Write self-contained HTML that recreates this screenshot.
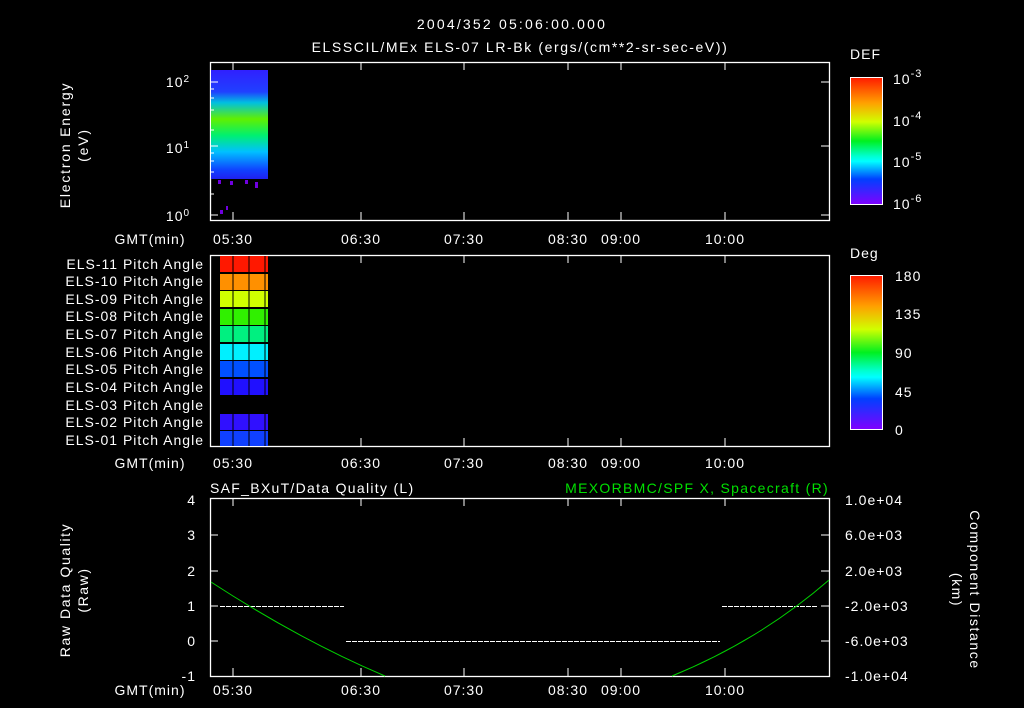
<!DOCTYPE html>
<html><head><style>html,body{margin:0;background:#000;}svg{display:block}text{font-family:"Liberation Sans",sans-serif;fill:#fff;font-size:14px;letter-spacing:1px}</style></head>
<body>
<svg width="1024" height="708" viewBox="0 0 1024 708">
<defs>
<linearGradient id="rb" x1="0" y1="0" x2="0" y2="1">
<stop offset="0" stop-color="#ff1a00"/><stop offset="0.2" stop-color="#ffa000"/><stop offset="0.35" stop-color="#d0ff00"/><stop offset="0.5" stop-color="#00f020"/><stop offset="0.62" stop-color="#00ffd0"/><stop offset="0.66" stop-color="#00ffff"/><stop offset="0.8" stop-color="#0040ff"/><stop offset="1" stop-color="#8000ff"/></linearGradient>
<linearGradient id="hm" x1="0" y1="0" x2="0" y2="1">
<stop offset="0" stop-color="#3020ff"/><stop offset="0.2" stop-color="#2040ff"/><stop offset="0.3" stop-color="#00c0e0"/><stop offset="0.45" stop-color="#60f000"/><stop offset="0.6" stop-color="#00f070"/><stop offset="0.75" stop-color="#00c0ff"/><stop offset="0.92" stop-color="#1040ff"/><stop offset="1" stop-color="#2020f0"/></linearGradient>
</defs>
<text x="512" y="29" text-anchor="middle" font-size="16" style="letter-spacing:2.2px">2004/352 05:06:00.000</text>
<text x="520" y="52" text-anchor="middle" font-size="16" style="letter-spacing:1.6px">ELSSCIL/MEx ELS-07 LR-Bk  (ergs/(cm**2-sr-sec-eV))</text>
<g stroke="#fff" fill="none" stroke-width="1.3">
<rect x="210.5" y="62.5" width="619" height="158"/>
<rect x="210.5" y="255.5" width="619" height="191"/>
<rect x="210.5" y="498.5" width="619" height="178"/>
</g>
<rect x="211" y="70" width="57" height="109" fill="url(#hm)"/>
<g fill="#7000e0"><rect x="218" y="180" width="3" height="4"/><rect x="230" y="181" width="3" height="4"/><rect x="245" y="180" width="3" height="4"/><rect x="255" y="182" width="3" height="6"/><rect x="220" y="210" width="3" height="4"/><rect x="226" y="206" width="2" height="4"/></g>
<g stroke="#fff" stroke-width="1">
<path d="M210 82h8M210 146h8M210 215h8M829 82h-8M829 146h-8M829 215h-8M210 89h4M210 98h4M210 110h4M210 130h4M210 153h4M210 161h4M210 172h4M210 194h4"/>
<path d="M233 62v8M361 62v8M464 62v8M568 62v8M621 62v8M725 62v8M233 220v-8M361 220v-8M464 220v-8M568 220v-8M621 220v-8M725 220v-8"/>
<path d="M233 255v8M361 255v8M464 255v8M568 255v8M621 255v8M725 255v8M233 446v-8M361 446v-8M464 446v-8M568 446v-8M621 446v-8M725 446v-8"/>
<path d="M233 498v8M361 498v8M464 498v8M568 498v8M621 498v8M725 498v8M233 676v-8M361 676v-8M464 676v-8M568 676v-8M621 676v-8M725 676v-8"/>
<path d="M210 535h8M210 571h8M210 606h8M210 641h8M829 535h-8M829 571h-8M829 606h-8M829 641h-8"/>
</g>
<text x="178" y="87" text-anchor="middle">10<tspan dy="-5" font-size="10">2</tspan></text>
<text x="178" y="153" text-anchor="middle">10<tspan dy="-5" font-size="10">1</tspan></text>
<text x="178" y="221" text-anchor="middle">10<tspan dy="-5" font-size="10">0</tspan></text>
<text transform="translate(70,145) rotate(-90)" text-anchor="middle" font-size="15" style="letter-spacing:1.8px">Electron Energy</text>
<text transform="translate(88,145) rotate(-90)" text-anchor="middle" font-size="15" style="letter-spacing:1.8px">(eV)</text>
<g font-size="14" text-anchor="middle">
<text x="150" y="244">GMT(min)</text><text x="233" y="244">05:30</text><text x="361" y="244">06:30</text><text x="464" y="244">07:30</text><text x="568" y="244">08:30</text><text x="621" y="244">09:00</text><text x="725" y="244">10:00</text>
<text x="150" y="468">GMT(min)</text><text x="233" y="468">05:30</text><text x="361" y="468">06:30</text><text x="464" y="468">07:30</text><text x="568" y="468">08:30</text><text x="621" y="468">09:00</text><text x="725" y="468">10:00</text>
<text x="150" y="695">GMT(min)</text><text x="233" y="695">05:30</text><text x="361" y="695">06:30</text><text x="464" y="695">07:30</text><text x="568" y="695">08:30</text><text x="621" y="695">09:00</text><text x="725" y="695">10:00</text>
</g>
<g>
<rect x="220" y="256" width="48" height="16" fill="#ff1800"/>
<rect x="220" y="274" width="48" height="16" fill="#ff9000"/>
<rect x="220" y="291" width="48" height="16" fill="#d0ff00"/>
<rect x="220" y="309" width="48" height="16" fill="#30f000"/>
<rect x="220" y="326" width="48" height="16" fill="#00f080"/>
<rect x="220" y="344" width="48" height="16" fill="#00f0ff"/>
<rect x="220" y="361" width="48" height="16" fill="#0050ff"/>
<rect x="220" y="379" width="48" height="16" fill="#2010ff"/>
<rect x="220" y="414" width="48" height="16" fill="#3010ff"/>
<rect x="220" y="431" width="48" height="15" fill="#1040ff"/>
<path d="M233 256v190M249 256v190M265 256v190" stroke="#000" stroke-width="1"/>
</g>
<g text-anchor="end" font-size="13">
<text x="204" y="269">ELS-11 Pitch Angle</text><text x="204" y="286">ELS-10 Pitch Angle</text><text x="204" y="304">ELS-09 Pitch Angle</text><text x="204" y="321">ELS-08 Pitch Angle</text><text x="204" y="339">ELS-07 Pitch Angle</text><text x="204" y="357">ELS-06 Pitch Angle</text><text x="204" y="374">ELS-05 Pitch Angle</text><text x="204" y="392">ELS-04 Pitch Angle</text><text x="204" y="410">ELS-03 Pitch Angle</text><text x="204" y="427">ELS-02 Pitch Angle</text><text x="204" y="445">ELS-01 Pitch Angle</text>
</g>
<rect x="850.5" y="77.5" width="32" height="127" fill="url(#rb)" stroke="#fff"/>
<rect x="850.5" y="275.5" width="32" height="154" fill="url(#rb)" stroke="#fff"/>
<text x="850" y="59" font-size="16">DEF</text>
<text x="850" y="258" font-size="16">Deg</text>
<g font-size="16">
<text x="893" y="84">10<tspan dy="-7" font-size="11">-3</tspan></text>
<text x="893" y="126">10<tspan dy="-7" font-size="11">-4</tspan></text>
<text x="893" y="167">10<tspan dy="-7" font-size="11">-5</tspan></text>
<text x="893" y="209">10<tspan dy="-7" font-size="11">-6</tspan></text>
<text x="895" y="281">180</text><text x="895" y="319">135</text><text x="895" y="358">90</text><text x="895" y="397">45</text><text x="895" y="435">0</text>
</g>
<text x="210" y="493" font-size="15" style="letter-spacing:1.3px">SAF_BXuT/Data Quality (L)</text>
<text x="829" y="493" font-size="15" text-anchor="end" style="fill:#00e000;letter-spacing:1.3px">MEXORBMC/SPF X, Spacecraft (R)</text>
<g text-anchor="end" font-size="14"><text x="196" y="505">4</text><text x="196" y="540">3</text><text x="196" y="576">2</text><text x="196" y="611">1</text><text x="196" y="646">0</text><text x="196" y="681">-1</text></g>
<g font-size="12.5"><text x="845" y="505">1.0e+04</text><text x="845" y="540">6.0e+03</text><text x="845" y="576">2.0e+03</text><text x="845" y="611">-2.0e+03</text><text x="845" y="646">-6.0e+03</text><text x="845" y="681">-1.0e+04</text></g>
<text transform="translate(70,590) rotate(-90)" text-anchor="middle" font-size="15" style="letter-spacing:1.6px">Raw Data Quality</text>
<text transform="translate(88,590) rotate(-90)" text-anchor="middle" font-size="15" style="letter-spacing:1.6px">(Raw)</text>
<text transform="translate(970,590) rotate(90)" text-anchor="middle" font-size="15" style="letter-spacing:1.6px">Component Distance</text>
<text transform="translate(952,590) rotate(90)" text-anchor="middle" font-size="15" style="letter-spacing:1.6px">(km)</text>
<g stroke="#fff" stroke-width="1" stroke-dasharray="5 1">
<path d="M220 606.5h124M346 641.5h374M722 606.5h96"/>
</g>
<path d="M211 582 Q300 640 385 676" stroke="#00d000" fill="none" stroke-width="1"/>
<path d="M672 676 Q760 640 829 580" stroke="#00d000" fill="none" stroke-width="1"/>
</svg>
</body></html>
